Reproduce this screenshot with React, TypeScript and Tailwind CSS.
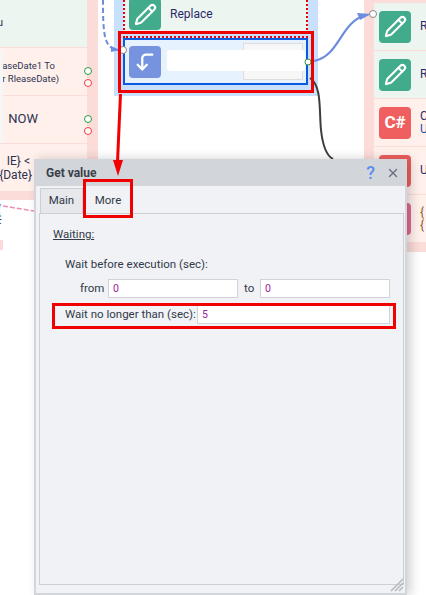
import React from "react";
import { Pencil, CornerLeftDown, X } from "lucide-react";

const font = { fontFamily: 'Roboto, "Noto Sans", sans-serif' };

function Tile({ color, children }: { color: string; children: React.ReactNode }) {
  return <div className={`w-8 h-8 rounded-[4px] flex items-center justify-center shrink-0 text-white ${color}`}>{children}</div>;
}

function RightRow({ bg, tile, lines }: { bg: string; tile: React.ReactNode; lines: React.ReactNode }) {
  return (
    <div className={`h-[47px] mb-px pl-[5px] flex items-center gap-[9px] whitespace-nowrap ${bg}`}>
      {tile}
      <div className="text-[12px] leading-[13px] text-[#2a2a6a]">{lines}</div>
    </div>
  );
}

function Dot({ cls }: { cls: string }) {
  return <div className={`w-[8px] h-[8px] rounded-full border border-solid bg-white ${cls}`} />;
}

function LeftRow({ bg, children, dots }: { bg: string; children: React.ReactNode; dots?: boolean }) {
  return (
    <div className={`h-[47px] mb-px flex relative ${bg}`}>
      <div className="w-[87px] flex flex-col justify-center items-end whitespace-nowrap overflow-hidden text-[#2c3350]">{children}</div>
      <div className="w-[11px] bg-[#fcdcd8]" />
      {dots && (
        <div className="absolute left-[84px] top-[19px] flex flex-col gap-[4px]">
          <Dot cls="border-[#2f9a3c]" />
          <Dot cls="border-[#ee3b3b]" />
        </div>
      )}
    </div>
  );
}

function Field({ w, value }: { w: string; value: string }) {
  return (
    <div className={`${w} h-[19px] bg-white border border-solid border-[#d0d4da] pl-[4px] text-[10.5px] leading-[18px] text-[#a020a0]`}>{value}</div>
  );
}

export default function App() {
  return (
    <div className="relative w-[426px] h-[595px] overflow-hidden bg-white" style={font}>
      {/* left block */}
      <div className="absolute left-0 top-0 w-[98px] h-[200px] bg-[#fcdcd8]">
        <LeftRow bg="bg-[#edf5f0]"><span className="text-[11px] self-start -ml-[3px]">u</span></LeftRow>
        <LeftRow bg="bg-[#fff0ec]" dots>
          <span className="text-[9.5px] leading-[13px] pr-[32px]">leaseDate1 To</span>
          <span className="text-[9.5px] leading-[13px] pr-[28px]">(Mr RleaseDate)</span>
        </LeftRow>
        <LeftRow bg="bg-[#fff0ec]" dots>
          <span className="text-[13px] leading-[15px] pr-[49px] mt-[6px]">NOW</span>
          <span className="text-[10px] leading-[11px] self-start -ml-[2px] -mt-[3px]">r</span>
        </LeftRow>
        <LeftRow bg="bg-[#fff0ec]">
          <span className="text-[12px] leading-[14px] pr-[57px]">{"IE} <"}</span>
          <span className="text-[12px] leading-[14px] pr-[55px]">{"{Date}"}</span>
        </LeftRow>
      </div>
      <div className="absolute left-0 top-[50px] w-[3px] h-[93px] bg-[#f4f7f4]" />
      <div className="absolute left-0 top-[200px] w-[3px] h-[50px] bg-white overflow-hidden text-[12px] leading-[14px] text-[#2c3350] pt-[3px]">
        <div className="-ml-[3px]">{"{"}</div>
        <div className="-ml-[5px]">F</div>
      </div>
      <div className="absolute left-0 top-[240px] w-[3px] h-[10px] bg-[#fcdcd8]" />

      {/* centre block */}
      <div className="absolute left-[114px] top-0 w-[204px] h-[96px] bg-[#c8e0fc]">
        <div className="ml-[9px] w-[185px] h-[32px] bg-[#edf5f0] flex items-end pl-[6px] pb-[2px] gap-[9px] text-[12px] text-[#2a2a6a]">
          <Tile color="bg-[#41ab8c]"><Pencil size={23} strokeWidth={2.2} /></Tile>
          <span className="pb-[9px] leading-[14px]">Replace</span>
        </div>
        <div className="ml-[9px] mt-[6px] w-[185px] h-[47px] bg-[#e6f2fe] border-2 border-solid border-[#0a5ae0] pl-[4px] pt-[6px] flex items-start gap-[6px]">
          <Tile color="bg-[#7693df]"><CornerLeftDown size={22} strokeWidth={2.5} /></Tile>
          <div className="flex-1 h-[37px] mt-[-3px] ml-[76px] mr-[3px] bg-[#f7f7f7] border border-solid border-[#dddddd]" />
        </div>
      </div>
      {/* dotted outline of group */}
      <div className="absolute left-[123px] top-0 w-[185px] h-[38px] border-2 border-t-0 border-dotted border-[#e8000b]" />
      <div className="absolute left-[123px] top-[36px] w-[185px] h-0 border-t-2 border-dotted border-[#e8000b]" />
      {/* redacted blob */}
      <div className="absolute left-[167px] top-[50px] w-[138px] h-[21px] bg-white rounded-[3px]" />

      {/* right block */}
      <div className="absolute left-[364px] top-0 w-[62px] h-[252px] bg-[#fcdcd8] pl-[10px] pt-[3px] overflow-hidden">
        <RightRow bg="bg-[#edf5f0]" tile={<Tile color="bg-[#41ab8c]"><Pencil size={23} strokeWidth={2.2} /></Tile>} lines="Replace" />
        <RightRow bg="bg-[#edf5f0]" tile={<Tile color="bg-[#41ab8c]"><Pencil size={23} strokeWidth={2.2} /></Tile>} lines="Replace" />
        <RightRow bg="bg-[#fff0ec]" tile={<Tile color="bg-[#ef5f5f]"><span className="text-[17px] font-bold">C#</span></Tile>} lines={<><div>Clear</div><div className="text-[#2050a0]">Url</div></>} />
        <RightRow bg="bg-[#fff0ec]" tile={<Tile color="bg-[#ef5f5f]"><span /></Tile>} lines="Url" />
        <RightRow bg="bg-[#fff0ec]" tile={<Tile color="bg-[#e06a90]"><span /></Tile>} lines={<><div className="text-[#8a5a20]">{"{"}</div><div className="text-[#8a5a20]">{"{"}</div></>} />
      </div>

      {/* connectors */}
      <svg className="absolute left-0 top-0" width="426" height="595" fill="none">
        <path d="M103 0C103 14 103 32 106 40C109 48 113 49 118 50" stroke="#6c8ce0" strokeWidth="2" strokeDasharray="5 3" />
        <path d="M111 46L120 50L111 52Z" fill="#6c8ce0" />
        <path d="M314 61C340 56 340 22 366 15" stroke="#6c8ce0" strokeWidth="2.2" />
        <path d="M357 13L371 14L360 20Z" fill="#6c8ce0" />
        <path d="M310 78C322 86 319 110 321 130C323 148 327 156 333 159" stroke="#3c3c3c" strokeWidth="2" />
        <path d="M3 206L34 211" stroke="#f08cb0" strokeWidth="1.5" strokeDasharray="5 2" />
        <circle cx="123" cy="50" r="3.5" fill="#fff" stroke="#888" />
        <circle cx="373" cy="14" r="3.5" fill="#fff" stroke="#888" />
        <circle cx="308" cy="62" r="3" fill="#fff" stroke="#2f9a3c" />
      </svg>

      {/* dialog */}
      <div className="absolute left-[34px] top-[159px] w-[373px] h-[436px] bg-[#f0f2f6] border-x-2 border-b-2 border-solid border-[#d2d6da] shadow-[4px_0_10px_rgba(0,0,0,0.18)] flex flex-col">
        <div className="h-[27px] -mx-[2px] bg-[#d2d6da] flex items-center pl-[12px] pr-[6px] shrink-0">
          <span className="text-[12px] font-bold text-[#3a4048] flex-1">Get value</span>
          <span className="text-[18px] leading-none font-medium text-[#5b8cf0] mr-[11px]">?</span>
          <X size={14} strokeWidth={2.4} className="text-[#6a7080] mr-[1px]" />
        </div>
        <div className="flex mt-[2px] ml-[4px] h-[25px] text-[11.5px] text-[#333a48] shrink-0">
          <div className="w-[43px] bg-[#e6e8ec] border border-b-0 border-solid border-[#ccd0d6] flex items-center justify-center">Main</div>
          <div className="w-[50px] bg-[#f0f2f6] flex items-center justify-center">More</div>
        </div>
        <div className="flex-1 ml-[3px] mr-[1px] mb-[8px] border border-solid border-[#ccd0d6] pl-[13px] text-[11.5px] text-[#333a48] relative">
          <div className="mt-[13px] leading-[15px] underline">Waiting:</div>
          <div className="mt-[15px] ml-[12px] leading-[15px]">Wait before execution (sec):</div>
          <div className="mt-[7px] ml-[27px] flex items-center">
            <span className="w-[28px]">from</span>
            <Field w="w-[130px]" value="0" />
            <span className="w-[22px] pl-[6px]">to</span>
            <Field w="w-[130px]" value="0" />
          </div>
          <div className="mt-[7px] ml-[12px] flex items-center">
            <span className="w-[132px] whitespace-nowrap">Wait no longer than (sec):</span>
            <Field w="w-[193px]" value="5" />
          </div>
          <svg className="absolute right-[-1px] bottom-[-8px]" width="14" height="14" stroke="#b4b8be" strokeWidth="1.5">
            <path d="M1 13L13 1M5 13L13 5M9 13L13 9" />
          </svg>
        </div>
      </div>

      {/* annotations */}
      <div className="absolute left-[118px] top-[31px] w-[196px] h-[62px] border-[3px] border-solid border-[#f00000]" />
      <div className="absolute left-[83px] top-[179px] w-[50px] h-[39px] border-[3px] border-solid border-[#f00000]" />
      <div className="absolute left-[52px] top-[303px] w-[344px] h-[26px] border-[3px] border-solid border-[#f00000]" />
      <svg className="absolute left-0 top-0" width="426" height="595" fill="none">
        <path d="M120.5 94L117.5 162" stroke="#f00000" strokeWidth="3" />
        <path d="M113 160H123L118 176Z" fill="#f00000" />
      </svg>
    </div>
  );
}
